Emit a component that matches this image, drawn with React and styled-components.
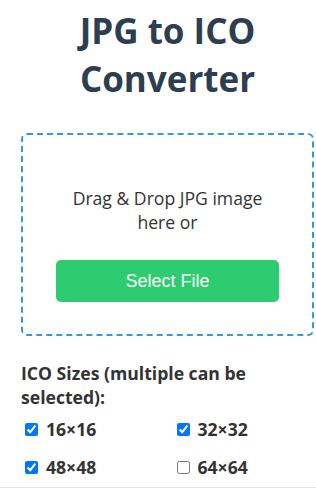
import React from "react";
import styled, { createGlobalStyle } from "styled-components";

const Global = createGlobalStyle`
  html, body { margin: 0; padding: 0; background: #ffffff; }
  body { font-family: "Open Sans", "Noto Sans", Arial, sans-serif; color: #333333; }
  * { box-sizing: border-box; }
`;

const Page = styled.div`
  width: 316px;
  overflow: hidden;
`;

const Container = styled.div`
  padding: 7px 2px 0 21px;
`;

const Title = styled.h1`
  margin: 0 0 30px;
  font-size: 35px;
  line-height: 48px;
  font-weight: 700;
  text-align: center;
  color: #2c3e50;
`;

const DropZone = styled.div`
  border: 2px dashed #3498db;
  border-radius: 6px;
  padding: 51px 20px 32px;
  text-align: center;
  display: flex;
  flex-direction: column;
  align-items: center;
`;

const Prompt = styled.p`
  margin: 0;
  max-width: 210px;
  font-size: 17.6px;
  line-height: 24px;
  color: #333333;
`;

const SelectButton = styled.button`
  margin-top: 26px;
  width: 223px;
  height: 42px;
  border: none;
  border-radius: 5px;
  background: #2ecc71;
  color: #ffffff;
  font-family: "Liberation Sans", Arial, sans-serif;
  font-size: 18px;
  cursor: pointer;
`;

const SizesLabel = styled.div`
  margin-top: 25px;
  font-size: 17.6px;
  line-height: 24px;
  font-weight: 700;
  color: #333333;
`;

const SizeGrid = styled.div`
  margin-top: 8px;
  display: grid;
  grid-template-columns: 1fr 1fr;
  column-gap: 10px;
  row-gap: 14px;
`;

const SizeOption = styled.label`
  display: flex;
  align-items: center;
  font-size: 17.6px;
  line-height: 24px;
  font-weight: 700;
  color: #333333;
`;

const Check = styled.input`
  width: 13px;
  height: 13px;
  margin: 0 8px 0 4px;
`;

const Divider = styled.div`
  margin-top: 8px;
  border-top: 1px solid #e2e2e2;
  height: 10px;
`;

const sizes = [
  { label: "16×16", checked: true },
  { label: "32×32", checked: true },
  { label: "48×48", checked: true },
  { label: "64×64", checked: false },
];

export default function App() {
  return (
    <Page>
      <Global />
      <Container>
        <Title>JPG to ICO Converter</Title>
        <DropZone>
          <Prompt>Drag &amp; Drop JPG image here or</Prompt>
          <SelectButton>Select File</SelectButton>
        </DropZone>
        <SizesLabel>ICO Sizes (multiple can be selected):</SizesLabel>
        <SizeGrid>
          {sizes.map((s) => (
            <SizeOption key={s.label}>
              <Check type="checkbox" defaultChecked={s.checked} />
              {s.label}
            </SizeOption>
          ))}
        </SizeGrid>
      </Container>
      <Divider />
    </Page>
  );
}
